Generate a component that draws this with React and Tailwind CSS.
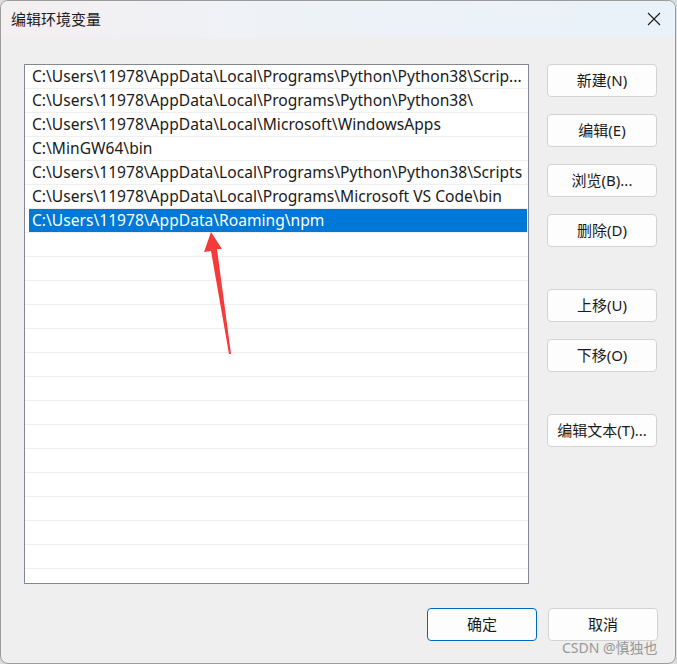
import React from "react";

const items = [
  "C:\\Users\\11978\\AppData\\Local\\Programs\\Python\\Python38\\Scrip...",
  "C:\\Users\\11978\\AppData\\Local\\Programs\\Python\\Python38\\",
  "C:\\Users\\11978\\AppData\\Local\\Microsoft\\WindowsApps",
  "C:\\MinGW64\\bin",
  "C:\\Users\\11978\\AppData\\Local\\Programs\\Python\\Python38\\Scripts",
  "C:\\Users\\11978\\AppData\\Local\\Programs\\Microsoft VS Code\\bin",
  "C:\\Users\\11978\\AppData\\Roaming\\npm",
];

const font = { fontFamily: '"Noto Sans", "Noto Sans CJK SC", sans-serif' };

function Btn({ children, primary, className = "" }) {
  return (
    <div
      className={`w-[110px] h-[33px] flex items-center justify-center rounded-[4px] bg-[#fdfdfd] text-[15px] text-[#1a1a1a] ${
        primary ? "border border-[#0067c0]" : "border border-[#d2d2d2]"
      } ${className}`}
    >
      {children}
    </div>
  );
}

export default function App() {
  const rows = [];
  for (let i = 0; i < 22; i++) rows.push(items[i] || "");
  return (
    <div className="relative w-[677px] h-[664px] bg-[#dcdcdc] overflow-hidden" style={font}>
      <div className="w-[676px] h-[664px] rounded-[8px] border border-[#9c9c9c] bg-[#efefef] overflow-hidden flex flex-col">
        <div className="h-[36px] shrink-0 flex items-center justify-between pl-[10px] pr-[13px] bg-[linear-gradient(90deg,#f4eff1_0%,#eef2f7_40%,#e9f2f9_100%)]">
          <span className="text-[15px] text-[#1a1a1a]">编辑环境变量</span>
          <svg width="14" height="14" viewBox="0 0 14 14" className="mr-[1px]">
            <path d="M1 1 L13 13 M13 1 L1 13" stroke="#1a1a1a" strokeWidth="1.1" fill="none" />
          </svg>
        </div>
        <div className="flex pl-[23px] pt-[27px]">
          <div className="w-[505px] h-[520px] border border-[#838790] bg-white overflow-hidden">
            {rows.map((t, i) => (
              <div key={i} className="h-[24px] border-b border-[#efefef] flex items-center">
                <div
                  className={`h-[23px] flex items-center ml-[4px] mr-[1px] flex-1 pl-[3px] pt-[1px] text-[15.6px] whitespace-nowrap ${
                    i === 6 ? "bg-[#0078d7] text-white" : "text-[#1a1a1a]"
                  }`}
                >
                  {t}
                </div>
              </div>
            ))}
          </div>
          <div className="ml-[18px] flex flex-col">
            <Btn>新建(N)</Btn>
            <Btn className="mt-[17px]">编辑(E)</Btn>
            <Btn className="mt-[17px]">浏览(B)...</Btn>
            <Btn className="mt-[17px]">删除(D)</Btn>
            <Btn className="mt-[42px]">上移(U)</Btn>
            <Btn className="mt-[17px]">下移(O)</Btn>
            <Btn className="mt-[42px]">编辑文本(T)...</Btn>
          </div>
        </div>
        <div className="flex justify-end gap-[11px] pr-[17px] mt-[24px]">
          <Btn primary>确定</Btn>
          <Btn>取消</Btn>
        </div>
      </div>
      <svg className="absolute left-0 top-0 pointer-events-none" width="677" height="664">
        <polygon points="211,232 222,249 217,249 231,354 229,354 211,251 204,252" fill="#f53a3a" />
      </svg>
      <div className="absolute left-[562px] top-[637px] text-[14px] text-[#8e8e8e] opacity-90 whitespace-nowrap">
        CSDN @慎独也
      </div>
    </div>
  );
}
